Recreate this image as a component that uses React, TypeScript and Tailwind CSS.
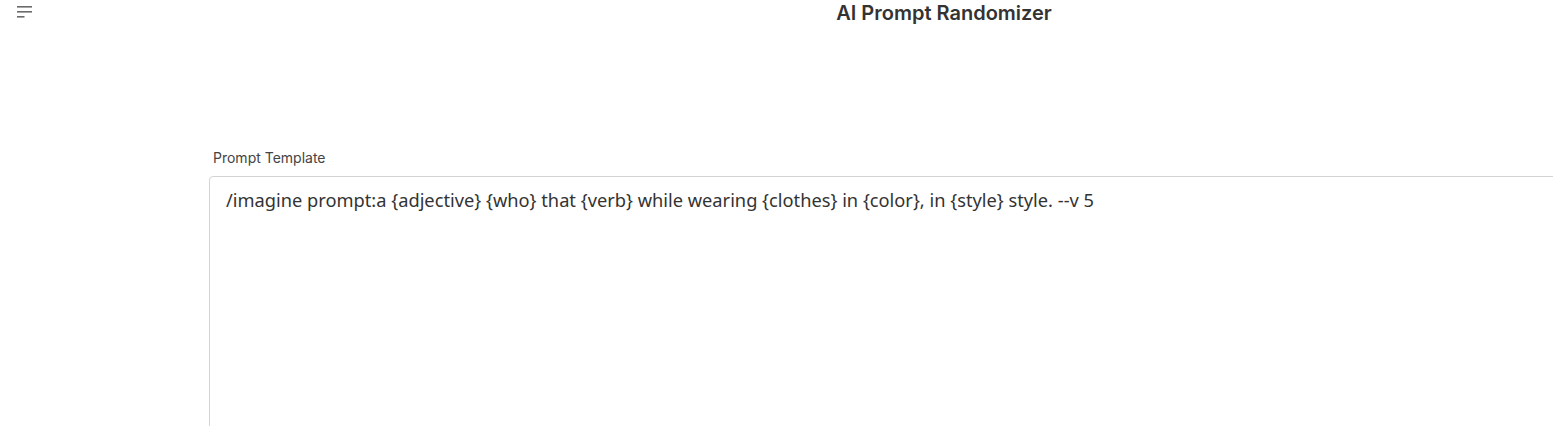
export default function App() {
  return (
    <div className="w-[1553px] h-[426px] overflow-hidden bg-white relative">
      <button className="absolute left-[16px] top-[4px] w-[18px] h-[16px]">
        <svg width="18" height="16" viewBox="0 0 18 16">
          <rect x="1" y="2" width="15" height="1.6" fill="#6b6b6b" />
          <rect x="1" y="7" width="15" height="1.6" fill="#6b6b6b" />
          <rect x="1" y="12" width="7.5" height="1.6" fill="#6b6b6b" />
        </svg>
      </button>
      <div className="ml-[209px] w-[1470px] flex flex-col">
        <h1
          className="text-center text-[20px] leading-[26px] font-semibold text-[#333] pt-0"
          style={{ fontFamily: "Inter, sans-serif" }}
        >
          AI Prompt Randomizer
        </h1>
        <div className="mt-[124px] flex flex-col">
          <label
            className="pl-[4px] text-[14px] leading-[16px] text-[#444]"
            style={{ fontFamily: "Inter, sans-serif" }}
          >
            Prompt Template
          </label>
          <div className="mt-[10px] border border-[#d4d4d4] rounded-[4px] h-[300px] px-[16px] pt-[11px]">
            <div
              className="text-[18.25px] leading-[24px] text-[#333]"
              style={{ fontFamily: "'Noto Sans', sans-serif" }}
            >
              /imagine prompt:a {"{adjective}"} {"{who}"} that {"{verb}"} while wearing {"{clothes}"} in {"{color}"}, in {"{style}"} style. --v 5
            </div>
          </div>
        </div>
      </div>
    </div>
  );
}
